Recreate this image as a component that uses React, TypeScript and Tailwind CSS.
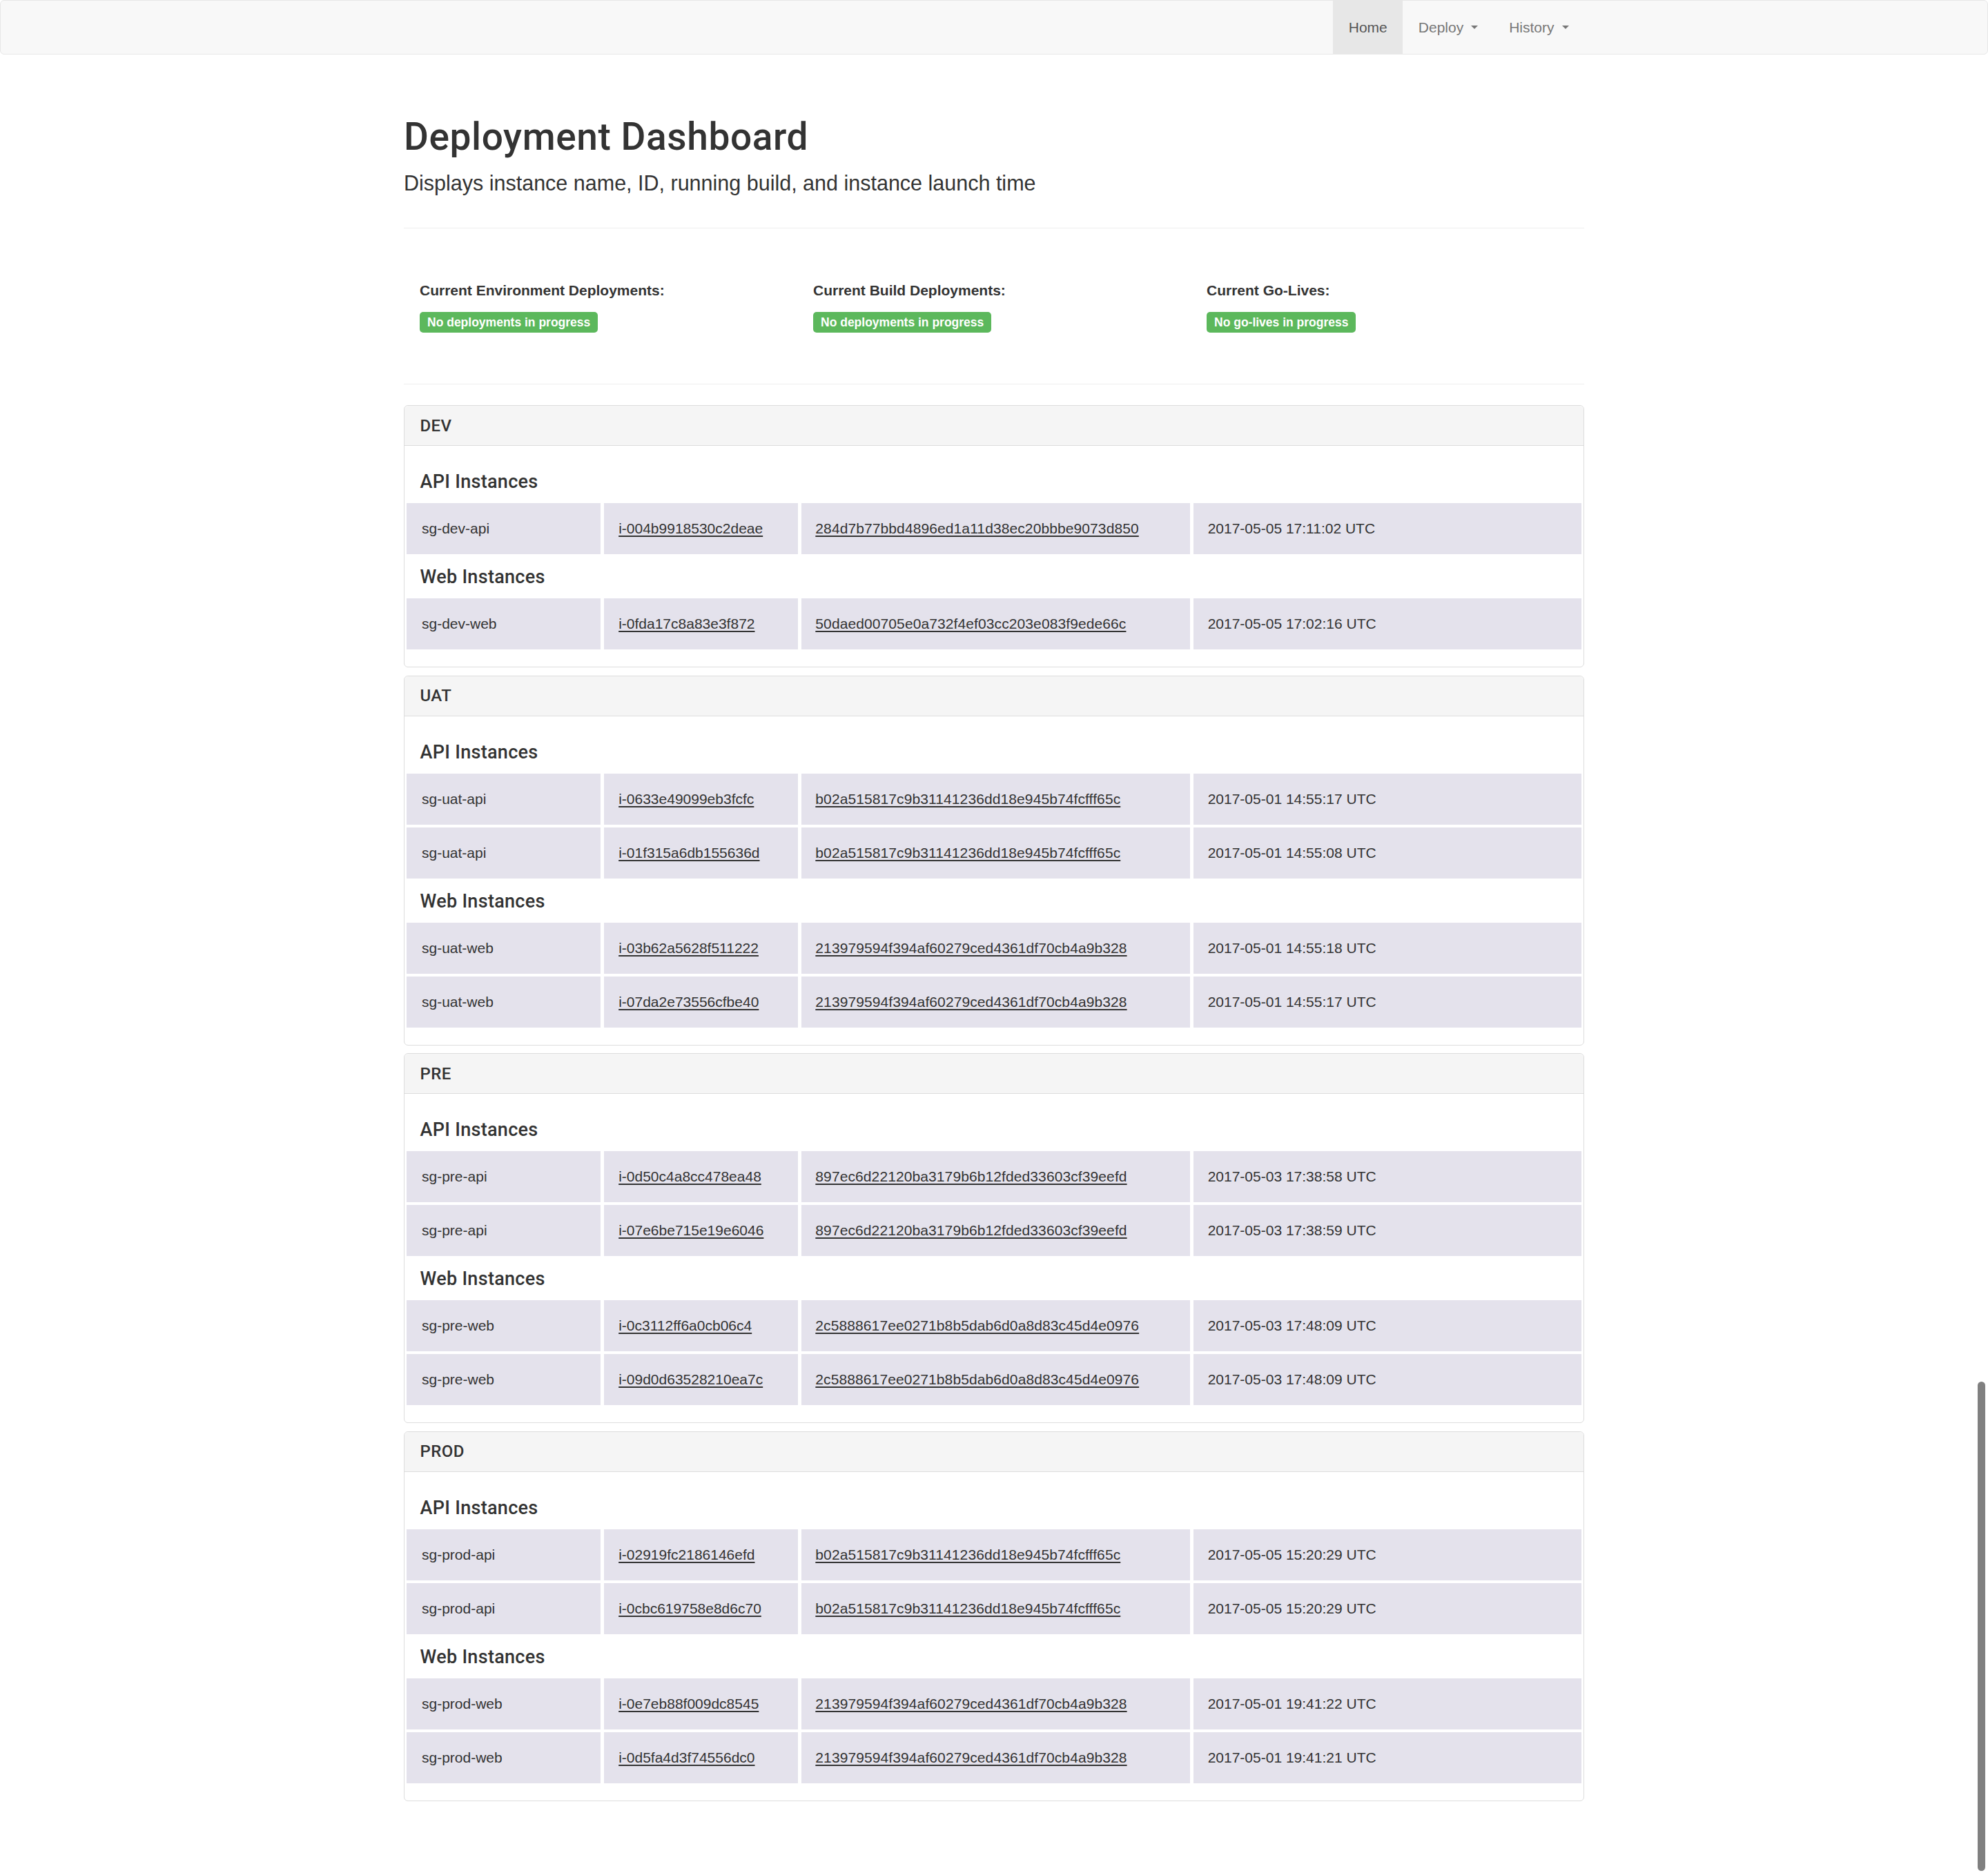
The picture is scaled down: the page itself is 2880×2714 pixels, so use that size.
type Instance = { name: string; id: string; build: string; launched: string };
type Env = { name: string; api: Instance[]; web: Instance[] };

const envs: Env[] = [
  {
    name: "DEV",
    api: [
      { name: "sg-dev-api", id: "i-004b9918530c2deae", build: "284d7b77bbd4896ed1a11d38ec20bbbe9073d850", launched: "2017-05-05 17:11:02 UTC" },
    ],
    web: [
      { name: "sg-dev-web", id: "i-0fda17c8a83e3f872", build: "50daed00705e0a732f4ef03cc203e083f9ede66c", launched: "2017-05-05 17:02:16 UTC" },
    ],
  },
  {
    name: "UAT",
    api: [
      { name: "sg-uat-api", id: "i-0633e49099eb3fcfc", build: "b02a515817c9b31141236dd18e945b74fcfff65c", launched: "2017-05-01 14:55:17 UTC" },
      { name: "sg-uat-api", id: "i-01f315a6db155636d", build: "b02a515817c9b31141236dd18e945b74fcfff65c", launched: "2017-05-01 14:55:08 UTC" },
    ],
    web: [
      { name: "sg-uat-web", id: "i-03b62a5628f511222", build: "213979594f394af60279ced4361df70cb4a9b328", launched: "2017-05-01 14:55:18 UTC" },
      { name: "sg-uat-web", id: "i-07da2e73556cfbe40", build: "213979594f394af60279ced4361df70cb4a9b328", launched: "2017-05-01 14:55:17 UTC" },
    ],
  },
  {
    name: "PRE",
    api: [
      { name: "sg-pre-api", id: "i-0d50c4a8cc478ea48", build: "897ec6d22120ba3179b6b12fded33603cf39eefd", launched: "2017-05-03 17:38:58 UTC" },
      { name: "sg-pre-api", id: "i-07e6be715e19e6046", build: "897ec6d22120ba3179b6b12fded33603cf39eefd", launched: "2017-05-03 17:38:59 UTC" },
    ],
    web: [
      { name: "sg-pre-web", id: "i-0c3112ff6a0cb06c4", build: "2c5888617ee0271b8b5dab6d0a8d83c45d4e0976", launched: "2017-05-03 17:48:09 UTC" },
      { name: "sg-pre-web", id: "i-09d0d63528210ea7c", build: "2c5888617ee0271b8b5dab6d0a8d83c45d4e0976", launched: "2017-05-03 17:48:09 UTC" },
    ],
  },
  {
    name: "PROD",
    api: [
      { name: "sg-prod-api", id: "i-02919fc2186146efd", build: "b02a515817c9b31141236dd18e945b74fcfff65c", launched: "2017-05-05 15:20:29 UTC" },
      { name: "sg-prod-api", id: "i-0cbc619758e8d6c70", build: "b02a515817c9b31141236dd18e945b74fcfff65c", launched: "2017-05-05 15:20:29 UTC" },
    ],
    web: [
      { name: "sg-prod-web", id: "i-0e7eb88f009dc8545", build: "213979594f394af60279ced4361df70cb4a9b328", launched: "2017-05-01 19:41:22 UTC" },
      { name: "sg-prod-web", id: "i-0d5fa4d3f74556dc0", build: "213979594f394af60279ced4361df70cb4a9b328", launched: "2017-05-01 19:41:21 UTC" },
    ],
  },
];

const statuses = [
  { title: "Current Environment Deployments:", badge: "No deployments in progress" },
  { title: "Current Build Deployments:", badge: "No deployments in progress" },
  { title: "Current Go-Lives:", badge: "No go-lives in progress" },
];

function Caret() {
  return <span className="ml-[11px] inline-block h-0 w-0 border-x-[5px] border-t-[5px] border-x-transparent border-t-[#777]" />;
}

function InstanceTable({ title, rows, first }: { title: string; rows: Instance[]; first?: boolean }) {
  return (
    <div>
      <h4
        className={`${first ? "mt-[37px]" : "mt-[18px]"} pl-[19.5px] font-['Roboto',sans-serif] text-[27px] leading-[30px] font-medium tracking-[0.3px]`}
      >
        {title}
      </h4>
      <div className="mt-[16px] flex flex-col gap-[4px]">
        {rows.map((r) => (
          <div key={r.id} className="grid grid-cols-[1fr_1fr_2fr_2fr] gap-x-[5px]">
            <div className="flex h-[74px] items-center bg-[#e4e2ec] px-[22px]">{r.name}</div>
            <div className="flex h-[74px] items-center bg-[#e4e2ec] px-[21px]">
              <a href="#" className="underline underline-offset-[3px]">{r.id}</a>
            </div>
            <div className="flex h-[74px] items-center bg-[#e4e2ec] px-[20px]">
              <a href="#" className="tracking-[0.1px] underline underline-offset-[3px]">{r.build}</a>
            </div>
            <div className="flex h-[74px] items-center bg-[#e4e2ec] px-[21px]">{r.launched}</div>
          </div>
        ))}
      </div>
    </div>
  );
}

export default function App() {
  return (
    <div className="relative min-h-[2714px] bg-white font-['Liberation_Sans',Arial,sans-serif] text-[21px] leading-[30px] text-[#333]">
      <nav className="h-[79px] rounded-[6px] border border-[#e7e7e7] bg-[#f8f8f8]">
        <div className="mx-auto flex h-full w-[1710px] justify-end">
          <ul className="flex h-full text-[#777]">
            <li className="flex items-center bg-[#e7e7e7] px-[22.5px] text-[#555]">Home</li>
            <li className="flex items-center px-[22.5px]">
              Deploy
              <Caret />
            </li>
            <li className="flex items-center px-[22.5px]">
              History
              <Caret />
            </li>
          </ul>
        </div>
      </nav>

      <main className="mx-auto w-[1710px] pb-[100px]">
        <div className="mt-[89px] border-b border-[#eee] pb-[43px]">
          <h1 className="font-['Roboto',sans-serif] text-[55px] leading-[60px] font-medium tracking-[0.6px]">
            Deployment Dashboard
          </h1>
          <p className="mt-[15px] text-[30.5px] leading-[44px]">
            Displays instance name, ID, running build, and instance launch time
          </p>
        </div>

        <div className="mt-[75px] grid grid-cols-[570px_570px_1fr] border-b border-[#eee] pb-[74px] pl-[23px]">
          {statuses.map((s) => (
            <div key={s.title}>
              <div className="font-bold">{s.title}</div>
              <span className="mt-[16px] inline-flex h-[30px] items-center rounded-[5px] bg-[#5cb85c] px-[11px] text-[17.5px] font-bold text-white">
                {s.badge}
              </span>
            </div>
          ))}
        </div>

        <div className="mt-[30px]">
          {envs.map((env) => (
            <section key={env.name} className="mb-[11.5px] rounded-[6px] border border-[#ddd]">
              <div className="flex h-[58px] items-center rounded-t-[6px] border-b border-[#ddd] bg-[#f5f5f5] px-[22.5px] font-['Roboto',sans-serif] text-[24px] font-medium tracking-[0.4px]">
                {env.name}
              </div>
              <div className="px-[3px] pb-[25px]">
                <InstanceTable title="API Instances" rows={env.api} first />
                <InstanceTable title="Web Instances" rows={env.web} />
              </div>
            </section>
          ))}
        </div>
      </main>

      <div className="absolute right-[4px] top-[2002px] h-[709px] w-[11px] rounded-full bg-[#808080]" />
    </div>
  );
}
